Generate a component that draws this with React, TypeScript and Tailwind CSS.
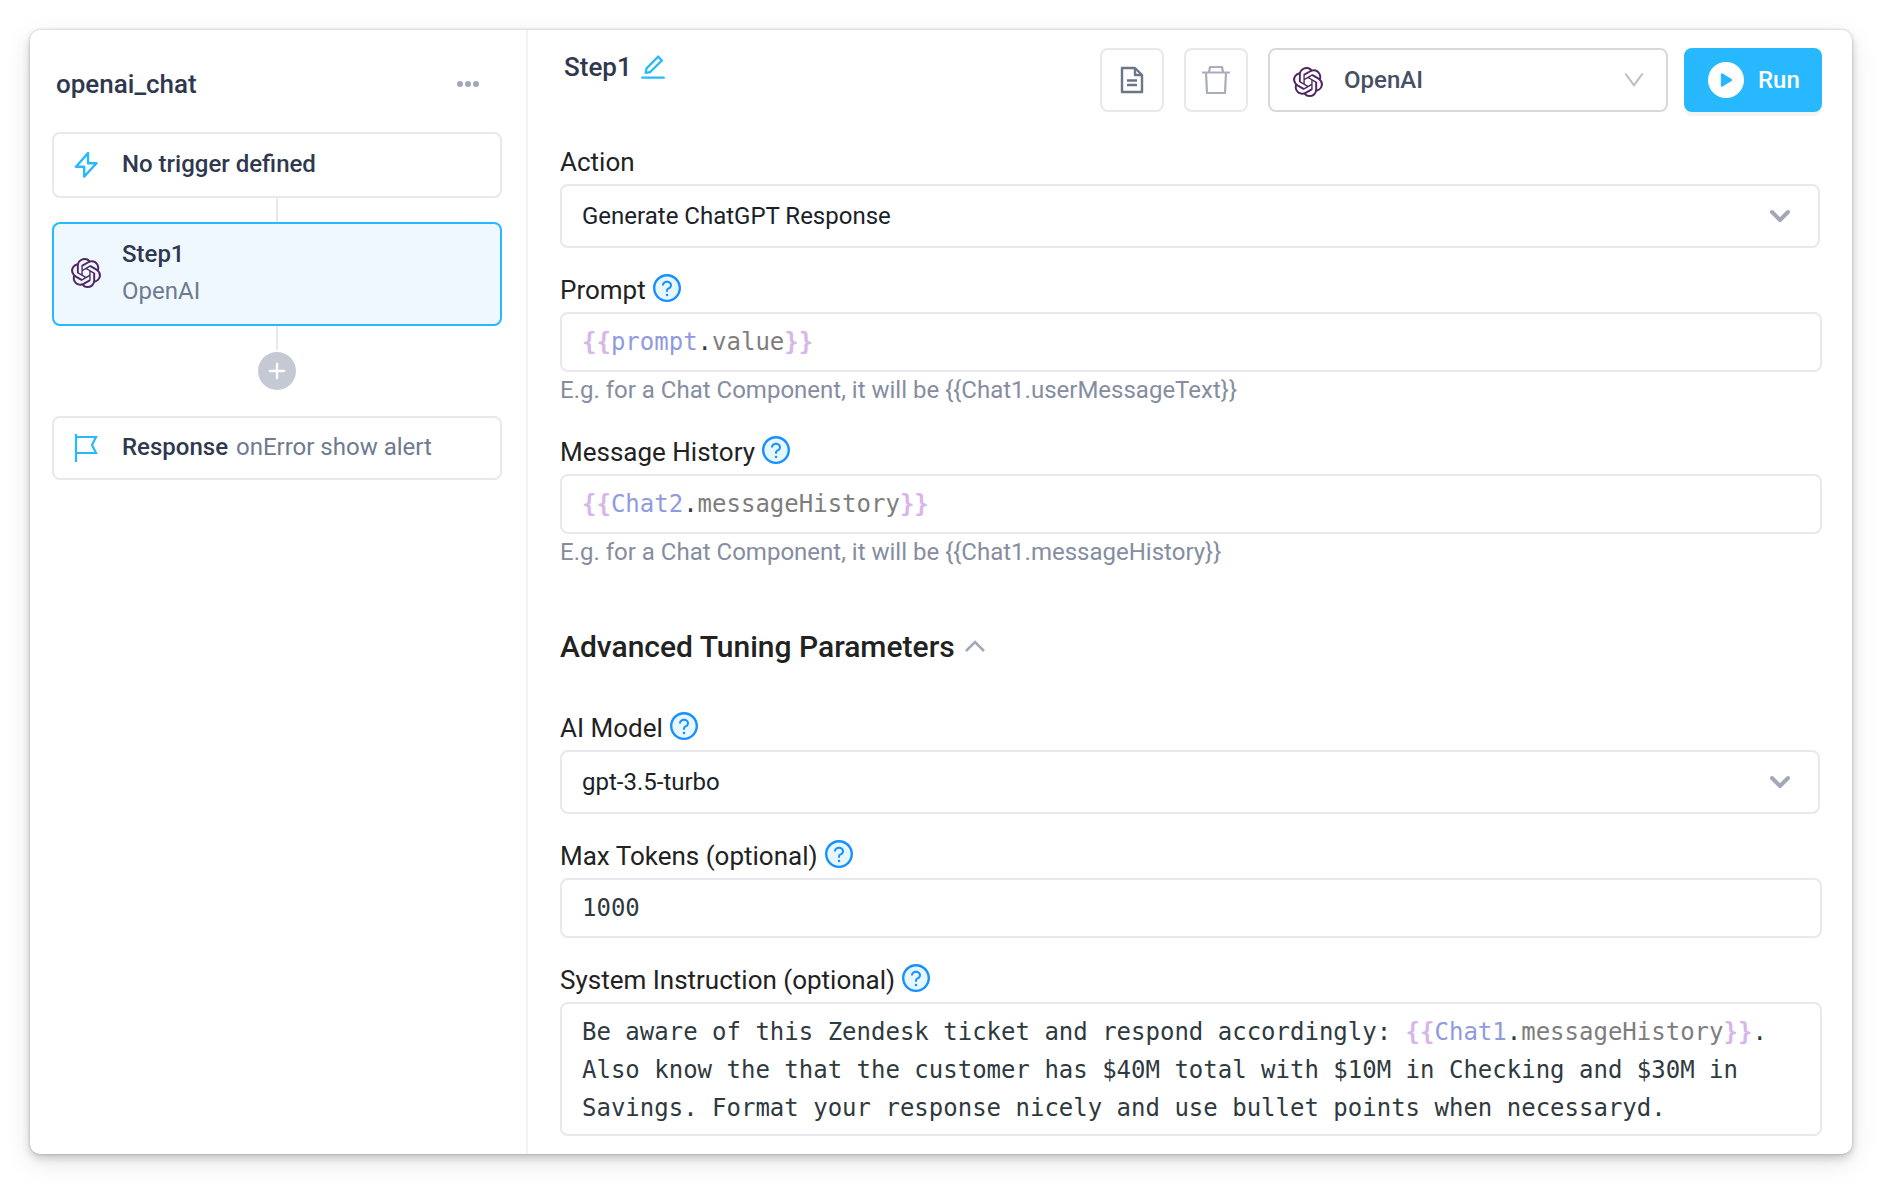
import { useState } from "react";
import { AiOutlineDown, AiOutlineEdit, AiOutlineQuestionCircle } from "react-icons/ai";
import { SiOpenai } from "react-icons/si";

const boxClass = "w-full rounded-[8px] border-2 border-[#e8e8ef] bg-white";
const codeClass = `${boxClass} block px-5 pt-[9px] font-['DejaVu_Sans_Mono',monospace] text-2xl leading-[38px] text-[#2f3a40] outline-none`;

function BoltIcon() {
    return (
        <svg width="24" height="28" viewBox="0 0 24 28" fill="none" stroke="#28b8ff" strokeWidth="2.4" strokeLinejoin="round">
            <path d="M14 2 2 15.8h8.2v9.800L22.500 12.200H14z" />
        </svg>
    );
}

function FlagIcon() {
    return (
        <svg width="24" height="28" viewBox="0 0 24 28" fill="none" stroke="#28b8ff" strokeWidth="2.2">
            <path d="M2 0v28M2 3h20l-4 8 4 8H2" />
        </svg>
    );
}

function DocIcon() {
    return (
        <svg width="24" height="28" viewBox="0 0 24 28" fill="none" stroke="#6b7689" strokeWidth="2.4" strokeLinejoin="round">
            <path d="M2 2h13l7 7v17H2z" />
            <path d="M15 2v7h7M7 14.5h10M7 19h10" />
        </svg>
    );
}

function TrashIcon() {
    return (
        <svg width="28" height="30" viewBox="0 0 28 30" fill="none" stroke="#a9adbc" strokeWidth="2.2" strokeLinejoin="round">
            <path d="M0 7.500h28M7 7l1-5h12l1 5M4 8l1 20h18l1-20" />
        </svg>
    );
}

function PlusIcon() {
    return (
        <svg width="18" height="18" viewBox="0 0 18 18" fill="none" stroke="currentColor" strokeWidth="2.4" strokeLinecap="round">
            <path d="M9 2v14M2 9h14" />
        </svg>
    );
}

function PlayIcon() {
    return (
        <svg width="36" height="36" viewBox="0 0 36 36">
            <circle cx="18" cy="18" r="18" fill="#fff" />
            <path d="M14 12.5v11l9-5.500z" fill="#28b8ff" stroke="#28b8ff" strokeWidth="2.4" strokeLinejoin="round" />
        </svg>
    );
}

function Chevron() {
    return (
        <svg className="pointer-events-none absolute top-1/2 right-[29px] -translate-y-1/2" width="22" height="14" viewBox="0 0 22 14" fill="none" stroke="#a3a8b8" strokeWidth="4" strokeLinecap="round" strokeLinejoin="round">
            <path d="m3 3 8 8 8-8" />
        </svg>
    );
}

function FieldLabel({ htmlFor, text, help = true }: { htmlFor: string; text: string; help?: boolean }) {
    return (
        <div className="mb-[6px] flex h-8 items-center gap-[7px]">
            <label htmlFor={htmlFor} className="text-[26px] leading-8 text-[#222]">
                {text}
            </label>
            {help && (
                <button type="button" aria-label={`About ${text}`} className="mb-1 size-7 rounded-full bg-[#e6f7ff] text-[#1890ff]">
                    <AiOutlineQuestionCircle className="-m-[2px] size-8 max-w-none" />
                </button>
            )}
        </div>
    );
}

function SelectField({ id, label, options, help }: { id: string; label: string; options: string[]; help?: boolean }) {
    return (
        <div className="mb-[26px]">
            <FieldLabel htmlFor={id} text={label} help={help} />
            <div className="relative mr-[2px]">
                <select id={id} className={`${boxClass} h-16 appearance-none px-5 text-2xl text-[#1a2229] outline-none`}>
                    {options.map((o) => (
                        <option key={o}>{o}</option>
                    ))}
                </select>
                <Chevron />
            </div>
        </div>
    );
}

// {{object.property}} with editor highlighting
function Binding({ object, property }: { object: string; property: string }) {
    return (
        <>
            <b className="text-[#d7b6ea]">{"{{"}</b>
            <span className="text-[#8f9ae0]">{object}</span>.<span className="text-[#7d7d7d]">{property}</span>
            <b className="text-[#d7b6ea]">{"}}"}</b>
        </>
    );
}

function CodeField({ id, label, object, property, hint }: { id: string; label: string; object: string; property: string; hint: string }) {
    return (
        <div className="mb-[30px]">
            <FieldLabel htmlFor={id} text={label} />
            <div id={id} role="textbox" aria-label={label} contentEditable suppressContentEditableWarning spellCheck={false} className={`${codeClass} pb-[9px]`}>
                <Binding object={object} property={property} />
            </div>
            <p className="mt-[2px] text-2xl leading-8 text-[#858da0]">{hint}</p>
        </div>
    );
}

function Sidebar() {
    return (
        <aside className="flex w-[498px] shrink-0 flex-col border-r-2 border-[#f2f2f6] pr-6 pl-[22px]">
            <div className="flex h-[102px] items-center justify-between pt-[6px] pr-[23px] pl-1">
                <h1 className="text-[26px] font-medium text-[#2f384e]">openai_chat</h1>
                <button type="button" aria-label="More options" className="flex gap-[2px]">
                    <span className="size-[6px] rounded-full bg-[#a3a8b8]" />
                    <span className="size-[6px] rounded-full bg-[#a3a8b8]" />
                    <span className="size-[6px] rounded-full bg-[#a3a8b8]" />
                </button>
            </div>

            <button type="button" className={`${boxClass} flex h-[66px] items-center gap-6 px-5 text-left`}>
                <BoltIcon />
                <span className="pb-[2px] text-2xl font-medium text-[#2f384e]">No trigger defined</span>
            </button>
            <div className="h-6 w-[2px] self-center bg-[#e8e8ef]" />
            <button type="button" className="flex h-[104px] w-full items-center gap-[21px] rounded-[8px] border-2 border-[#28b8ff] bg-[#f0f8ff] px-[17px] text-left">
                <SiOpenai className="mb-[2px] size-[30px] text-[#4f2860]" />
                <span className="flex flex-col pb-[2px] text-2xl leading-[37px]">
                    <span className="font-medium text-[#2f384e]">Step1</span>
                    <span className="text-[#6f7a90]">OpenAI</span>
                </span>
            </button>
            <div className="h-6 w-[2px] self-center bg-[#e8e8ef]" />
            <button type="button" aria-label="Add step" className="mt-[2px] flex size-[38px] items-center justify-center self-center rounded-full bg-[#c5c9d3] text-white">
                <PlusIcon />
            </button>
            <button type="button" className={`${boxClass} mt-[26px] flex h-16 items-center gap-6 px-5 text-left text-2xl`}>
                <FlagIcon />
                <span className="pb-[2px] text-[#6f7a90]">
                    <span className="mr-2 font-medium text-[#2f384e]">Response</span>
                    onError show alert
                </span>
            </button>
        </aside>
    );
}

function Toolbar() {
    return (
        <header className="mb-[34px] flex h-16 justify-between">
            <div className="flex h-[38px] items-center gap-[6px] pl-1">
                <h2 className="text-[26px] font-medium text-[#2f384e]">Step1</h2>
                <button type="button" aria-label="Rename step" className="text-[#28b8ff]">
                    <AiOutlineEdit className="size-[30px]" />
                </button>
            </div>
            <div className="flex">
                <button type="button" aria-label="Notes" className="mr-5 flex size-16 items-center justify-center rounded-[8px] border-2 border-[#e8e8ef]">
                    <DocIcon />
                </button>
                <button type="button" aria-label="Delete step" className="mr-5 flex size-16 items-center justify-center rounded-[8px] border-2 border-[#e8e8ef]">
                    <TrashIcon />
                </button>
                <div className="relative mr-4 w-[400px]">
                    <SiOpenai className="pointer-events-none absolute top-[19px] left-[25px] size-[30px] text-[#4f2860]" />
                    <select aria-label="Resource" className="h-16 w-full appearance-none rounded-[8px] border-2 border-[#d9d9d9] pl-[74px] text-2xl font-medium text-[#475063] outline-none">
                        <option>OpenAI</option>
                    </select>
                    <AiOutlineDown className="pointer-events-none absolute top-[19px] right-[21px] size-[26px] text-[#bfbfbf]" />
                </div>
                <button type="button" className="flex h-16 w-[138px] items-center gap-[14px] rounded-[8px] bg-[#28b8ff] pl-6 text-2xl font-medium text-white shadow-[0_4px_0_rgba(0,0,0,0.045)]">
                    <PlayIcon />
                    Run
                </button>
            </div>
        </header>
    );
}

export default function App() {
    const [tokens, setTokens] = useState("1000");
    const [open, setOpen] = useState(true);

    return (
        <div className="min-h-screen bg-white px-[30px] py-[30px] font-[Roboto,sans-serif]">
            <main className="flex rounded-[10px] bg-white shadow-[0_0_3px_rgba(0,0,0,0.2),0_4px_8px_rgba(0,0,0,0.18),0_8px_28px_rgba(0,0,0,0.1)]">
                <Sidebar />
                <section className="min-w-0 flex-1 pt-[18px] pr-[30px] pb-[18px] pl-8">
                    <Toolbar />
                    <SelectField id="action" label="Action" options={["Generate ChatGPT Response"]} help={false} />
                    <CodeField id="prompt" label="Prompt" object="prompt" property="value" hint="E.g. for a Chat Component, it will be {{Chat1.userMessageText}}" />
                    <CodeField id="history" label="Message History" object="Chat2" property="messageHistory" hint="E.g. for a Chat Component, it will be {{Chat1.messageHistory}}" />

                    <button type="button" aria-expanded={open} onClick={() => setOpen(!open)} className="mt-[60px] mb-12 flex h-9 items-center gap-[9px] text-[30px] font-medium text-[#222]">
                        Advanced Tuning Parameters
                        <svg width="22" height="14" viewBox="0 0 22 14" fill="none" stroke="#a3a8b8" strokeWidth="2.6">
                            <path d="m2 12 9-9 9 9" />
                        </svg>
                    </button>

                    {open && (
                        <>
                            <SelectField id="model" label="AI Model" options={["gpt-3.5-turbo"]} />
                            <div className="mb-[26px]">
                                <FieldLabel htmlFor="tokens" text="Max Tokens (optional)" />
                                <input id="tokens" value={tokens} onChange={(e) => setTokens(e.target.value)} className={`${codeClass} pb-[9px]`} />
                            </div>
                            <FieldLabel htmlFor="system" text="System Instruction (optional)" />
                            <div id="system" role="textbox" aria-label="System Instruction" contentEditable suppressContentEditableWarning spellCheck={false} className={`${codeClass} pb-[7px]`}>
                                Be aware of this Zendesk ticket and respond accordingly: <Binding object="Chat1" property="messageHistory" />. Also know the that the customer has $40M total with $10M in Checking and $30M in Savings. Format your response nicely and use bullet points when necessaryd.
                            </div>
                        </>
                    )}
                </section>
            </main>
        </div>
    );
}
